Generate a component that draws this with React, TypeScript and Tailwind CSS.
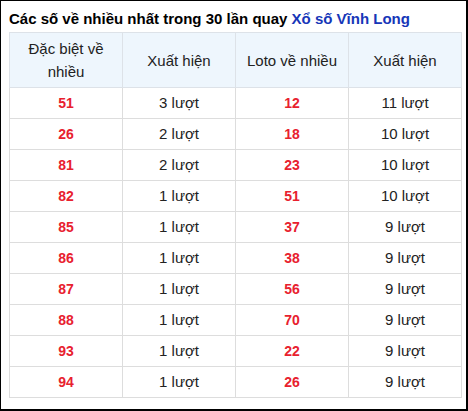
import React from 'react';

const rows: [string, string, string, string][] = [
  ['51', '3 lượt', '12', '11 lượt'],
  ['26', '2 lượt', '18', '10 lượt'],
  ['81', '2 lượt', '23', '10 lượt'],
  ['82', '1 lượt', '51', '10 lượt'],
  ['85', '1 lượt', '37', '9 lượt'],
  ['86', '1 lượt', '38', '9 lượt'],
  ['87', '1 lượt', '56', '9 lượt'],
  ['88', '1 lượt', '70', '9 lượt'],
  ['93', '1 lượt', '22', '9 lượt'],
  ['94', '1 lượt', '26', '9 lượt'],
];

const App: React.FC = () => {
  return (
    <div
      className="w-[468px] h-[411px] bg-white border-t border-l border-r-2 border-b-2 border-black pl-[8px] pt-[5px]"
      style={{ fontFamily: '"Liberation Sans", Arial, sans-serif' }}
    >
      <h2 className="text-[15px] font-bold leading-[26px] text-black">
        Các số về nhiều nhất trong 30 lần quay <span className="text-[#1636b8]">Xổ số Vĩnh Long</span>
      </h2>
      <table className="w-[453px] table-fixed border-collapse text-[15px] text-[#222] text-center">
        <thead>
          <tr className="bg-[#eef6fd]">
            <th className="font-normal border border-[#dde2e8] py-[4px] px-1 leading-[23px]">Đặc biệt về nhiều</th>
            <th className="font-normal border border-[#dde2e8] py-[4px] px-1 leading-[23px]">Xuất hiện</th>
            <th className="font-normal border border-[#dde2e8] py-[4px] px-1 leading-[23px]">Loto về nhiều</th>
            <th className="font-normal border border-[#dde2e8] py-[4px] px-1 leading-[23px]">Xuất hiện</th>
          </tr>
        </thead>
        <tbody>
          {rows.map((r, i) => (
            <tr key={i}>
              <td className="border border-[#dddddd] py-[3px] leading-[24px] font-bold text-[#e8212e] text-[14px]">{r[0]}</td>
              <td className="border border-[#dddddd] py-[3px] leading-[24px]">{r[1]}</td>
              <td className="border border-[#dddddd] py-[3px] leading-[24px] font-bold text-[#e8212e] text-[14px]">{r[2]}</td>
              <td className="border border-[#dddddd] py-[3px] leading-[24px]">{r[3]}</td>
            </tr>
          ))}
        </tbody>
      </table>
    </div>
  );
};

export default App;
